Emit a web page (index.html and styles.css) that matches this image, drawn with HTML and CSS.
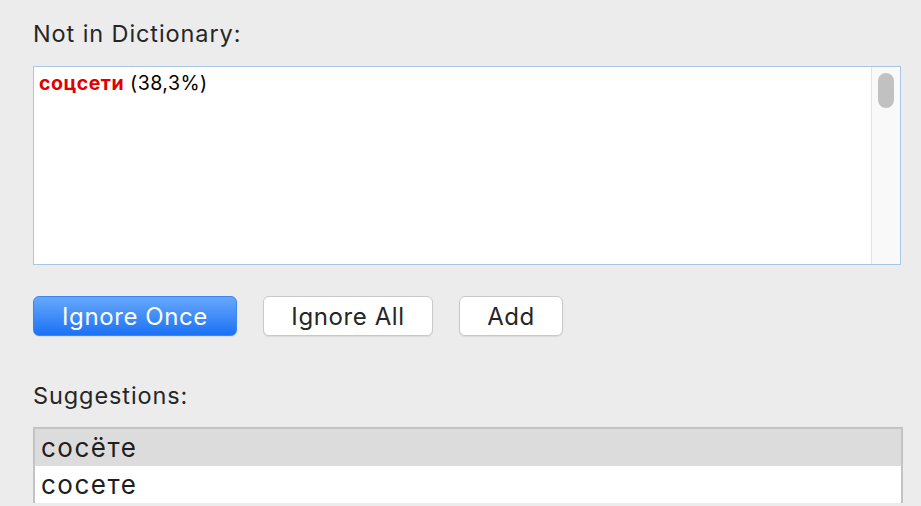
FILE: index.html
```html
<!DOCTYPE html>
<html>
<head>
<meta charset="utf-8">
<link rel="stylesheet" href="styles.css">
</head>
<body>
<div class="panel">
  <div class="label label-top">Not in Dictionary:</div>
  <div class="textbox">
    <div class="textarea"><span class="word">соцсети</span> (38,3%)</div>
    <div class="scrollbar"><div class="thumb"></div></div>
  </div>
  <div class="buttons">
    <button class="btn primary btn-once">Ignore Once</button>
    <button class="btn btn-all">Ignore All</button>
    <button class="btn btn-add">Add</button>
  </div>
  <div class="label label-sugg">Suggestions:</div>
  <div class="list">
    <div class="row selected">сосёте</div>
    <div class="row">сосете</div>
  </div>
</div>
</body>
</html>
```

FILE: styles.css
```css
html, body {
  margin: 0;
  padding: 0;
  background: #ececec;
  width: 921px;
  height: 506px;
  overflow: hidden;
}
.panel {
  display: flex;
  flex-direction: column;
  padding: 20px 20px 0 33px;
  font-family: Inter, "Liberation Sans", Arial, sans-serif;
  color: #262626;
}
.label {
  font-size: 23.5px;
  letter-spacing: 0.9px;
  line-height: 28px;
  height: 28px;
}
.label-top { margin-bottom: 18px; }
.textbox {
  width: 866px;
  height: 197px;
  border: 1px solid #a9c6e6;
  background: #fff;
  display: flex;
}
.textarea {
  flex: 1;
  padding: 5px 5px;
  font-size: 19.5px;
  letter-spacing: 0.5px;
  line-height: 22px;
  color: #000;
}
.word {
  color: #e00000;
  font-weight: bold;
}
.scrollbar {
  width: 28px;
  background: #f9f9f9;
  border-left: 1px solid #e2e2e2;
  padding-top: 6px;
  display: flex;
  justify-content: center;
}
.thumb {
  width: 16px;
  height: 35px;
  border-radius: 8px;
  background: #c1c1c1;
}
.buttons {
  display: flex;
  gap: 26px;
  margin-top: 31px;
}
.btn {
  height: 40px;
  border-radius: 6px;
  font-family: Inter, "Liberation Sans", Arial, sans-serif;
  font-size: 24px;
  letter-spacing: 0.6px;
  color: #262626;
  background: #fff;
  border: 1px solid #c9c9c9;
  box-shadow: 0 1px 1px rgba(0,0,0,0.08);
  padding: 0;
}
.btn-once { width: 204px; }
.btn-all { width: 170px; }
.btn-add { width: 104px; }
.primary {
  color: #fff;
  border: 1px solid #3b86f7;
  background: linear-gradient(#68a8fb, #1b72f5);
}
.label-sugg { margin-top: 46px; }
.list {
  margin-top: 17px;
  width: 866px;
  border: 2px solid #c3c3c3;
  border-bottom: none;
  background: #fff;
}
.row {
  height: 37px;
  line-height: 37px;
  font-size: 26px;
  letter-spacing: 1.5px;
  padding-left: 6px;
  color: #1e1e1e;
}
.row.selected {
  background: #dcdcdc;
}
```
